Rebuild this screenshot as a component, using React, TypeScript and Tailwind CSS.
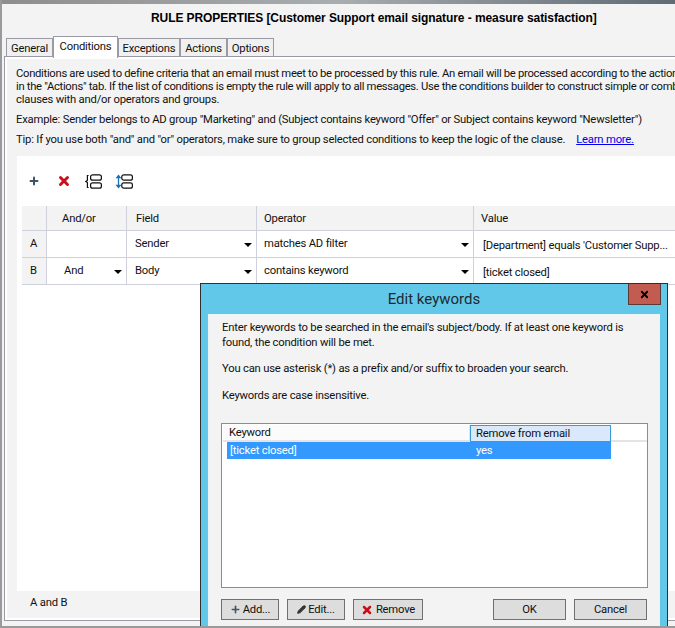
import { Plus, X, Pencil } from "lucide-react";

function GroupIcon() {
  return (
    <svg width="17" height="15" viewBox="0 0 17 15" fill="none" stroke="#111" strokeWidth="1.2">
      <path d="M3.6 1.5H2.4V6.4L0.8 7.5l1.6 1.1v4.9h1.2" />
      <rect x="5.6" y="0.8" width="10.8" height="5.4" rx="2" />
      <rect x="5.6" y="8.8" width="10.8" height="5.4" rx="2" />
    </svg>
  );
}

function MoveIcon() {
  return (
    <svg width="18" height="15" viewBox="0 0 18 15" fill="none">
      <path d="M3.5 3v9" stroke="#1673b8" strokeWidth="1.3" />
      <path d="M0.5 4.2L3.5 0.4l3 3.8zM0.5 10.8L3.5 14.6l3-3.8z" fill="#1673b8" />
      <rect x="6.8" y="0.8" width="10.6" height="5.4" rx="2" stroke="#111" strokeWidth="1.2" />
      <rect x="6.8" y="8.8" width="10.6" height="5.4" rx="2" stroke="#111" strokeWidth="1.2" />
    </svg>
  );
}

function Caret() {
  return <span className="absolute right-[4px] top-[12px] h-0 w-0 border-x-[4px] border-t-[4px] border-x-transparent border-t-black" />;
}

function Tab({ label, active, w }: { label: string; active?: boolean; w: string }) {
  if (active) {
    return (
      <div className={`${w} relative z-10 -mb-[2px] h-[22px] border border-b-0 border-[#9a9aa4] bg-white pt-[2px] text-center`}>
        {label}
      </div>
    );
  }
  return <div className={`${w} h-[18px] border border-b-0 border-[#9a9aa4] bg-[#f0f0f0] pt-[2px] text-center`}>{label}</div>;
}

function DialogButton({ children, className }: { children: React.ReactNode; className: string }) {
  return <div className={`flex h-[21px] items-center justify-center border border-[#707070] bg-[#dddddd] ${className}`}>{children}</div>;
}

export default function App() {
  return (
    <div className="relative h-[628px] w-[675px] overflow-hidden border-b-2 border-l-2 border-[#9a9a9a] bg-[#f3f3f3] font-['Roboto',sans-serif] text-[11.25px] leading-[16px] tracking-[-0.2px] text-[#111]">
      <div className="-ml-[2px] h-[4px] bg-gradient-to-r from-[#8d8d8d] via-[#a9adb0] to-[#5f6b75]" />
      <div className="pl-[149px] pt-[7px] font-['Liberation_Sans',sans-serif] text-[12px] font-bold leading-[15px] tracking-[-0.08px] text-black">
        RULE PROPERTIES [Customer Support email signature - measure satisfaction]
      </div>

      <div className="mt-[8px] flex h-[22px] items-end pl-[4px]">
        <Tab label="General" w="w-[47px]" />
        <Tab label="Conditions" active w="w-[65px]" />
        <Tab label="Exceptions" w="w-[62px]" />
        <Tab label="Actions" w="w-[47px]" />
        <Tab label="Options" w="w-[47px]" />
      </div>

      <div className="ml-[2px] h-[565px] w-[680px] border border-r-0 border-[#9a9aa4] bg-white p-[2px] pr-0">
        <div className="h-full bg-[#f3f3f3] pl-[10px]">
          <div className="-ml-[1px] whitespace-nowrap pt-[8px] leading-[13px]">
            <p className="tracking-[-0.3px]">Conditions are used to define criteria that an email must meet to be processed by this rule. An email will be processed according to the action</p>
            <p className="tracking-[-0.3px]">in the "Actions" tab. If the list of conditions is empty the rule will apply to all messages. Use the conditions builder to construct simple or combine</p>
            <p>clauses with and/or operators and groups.</p>
            <p className="pt-[7px]">Example: Sender belongs to AD group "Marketing" and (Subject contains keyword "Offer" or Subject contains keyword "Newsletter")</p>
            <p className="pt-[7px]">
              Tip: If you use both "and" and "or" operators, make sure to group selected conditions to keep the logic of the clause.
              <span className="ml-[11px] text-[#0000ee] underline">Learn more.</span>
            </p>
          </div>

          <div className="mt-[10px] h-[435px] bg-white pl-[5px]">
            <div className="flex h-[50px] items-center pl-[6px]">
              <Plus size={12} strokeWidth={4} className="text-[#3f5468]" />
              <X size={14} strokeWidth={5} className="ml-[17px] text-[#c8101a]" />
              <span className="ml-[14px] flex"><GroupIcon /></span>
              <span className="ml-[13px] flex"><MoveIcon /></span>
            </div>
            <div className="grid grid-cols-[25px_80px_130px_217px_240px] border-b border-[#cfd0de]">
              <div className="h-[25px] border-r border-b border-[#cfd0de] bg-[#f3f3f3]" />
              <div className="flex h-[25px] items-center border-r border-b border-[#cfd0de] bg-[#f3f3f3] pl-[15px] pt-[1px]">And/or</div>
              <div className="flex h-[25px] items-center border-r border-b border-[#cfd0de] bg-[#f3f3f3] pl-[9px] pt-[1px]">Field</div>
              <div className="flex h-[25px] items-center border-r border-b border-[#cfd0de] bg-[#f3f3f3] pl-[7px] pt-[1px]">Operator</div>
              <div className="flex h-[25px] items-center border-b border-[#cfd0de] bg-[#f3f3f3] pl-[7px] pt-[1px]">Value</div>

              <div className="flex h-[27px] items-center border-r border-b border-[#cfd0de] bg-[#f3f3f3] pl-[8px]">A</div>
              <div className="h-[27px] border-r border-b border-[#cfd0de]" />
              <div className="relative flex h-[27px] items-center border-r border-b border-[#cfd0de] pl-[8px]">Sender<Caret /></div>
              <div className="relative flex h-[27px] items-center border-r border-b border-[#cfd0de] pl-[7px]">matches AD filter<Caret /></div>
              <div className="flex h-[27px] items-center border-b border-[#cfd0de] pl-[9px] pt-[3px]">[Department] equals 'Customer Supp...</div>

              <div className="flex h-[26px] items-center border-r border-[#cfd0de] bg-[#f3f3f3] pl-[8px]">B</div>
              <div className="relative flex h-[26px] items-center border-r border-[#cfd0de] pl-[17px]">And<Caret /></div>
              <div className="relative flex h-[26px] items-center border-r border-[#cfd0de] pl-[8px]">Body<Caret /></div>
              <div className="relative flex h-[26px] items-center border-r border-[#cfd0de] pl-[7px]">contains keyword<Caret /></div>
              <div className="flex h-[26px] items-center pl-[9px] pt-[3px]">[ticket closed]</div>
            </div>
          </div>
          <div className="pl-[13px] pt-[4px]">A and B</div>
        </div>
      </div>

      {/* Edit keywords dialog */}
      <div className="absolute left-[198px] top-[283px] h-[360px] w-[468px] border border-[#2f2f2f] bg-[#62c8ea] px-[7px] pt-[30px]">
        <div className="absolute inset-x-0 top-[5px] text-center text-[15px] leading-[20px] tracking-normal text-[#1b2a30]">Edit keywords</div>
        <div className="absolute right-[6px] top-0 flex h-[21px] w-[33px] items-center justify-center border border-t-0 border-[#5a3a36] bg-[#c25c50]">
          <X size={11} strokeWidth={4} className="text-black" />
        </div>
        <div className="h-[330px] border border-[#e8f4f8] bg-[#f3f3f3] px-[13px] pt-[5px]">
          <div className="leading-[15px]">
            <p className="w-[410px]">Enter keywords to be searched in the email's subject/body. If at least one keyword is found, the condition will be met.</p>
            <p className="pt-[11px]">You can use asterisk (*) as a prefix and/or suffix to broaden your search.</p>
            <p className="pt-[12px]">Keywords are case insensitive.</p>
          </div>
          <div className="-ml-[1px] mt-[20px] h-[165px] w-[427px] border border-[#8d8d8d] bg-white pt-[1px] pl-[1px]">
            <div className="flex h-[17px] border-b-2 border-[#e4e4e4]">
              <div className="w-[247px] border-r border-[#e4e4e4] bg-[#fbfbfb] pl-[6px] leading-[15px]">Keyword</div>
              <div className="h-[17px] w-[141px] border border-[#3a9ad4] bg-[#d9e8fb] pl-[5px] leading-[15px]">Remove from email</div>
            </div>
            <div className="ml-[4px] flex h-[17px] w-[384px] items-center bg-[#3399ff] text-white">
              <span className="w-[249px] pl-[3px]">[ticket closed]</span>
              <span>yes</span>
            </div>
          </div>
          <div className="-ml-[1px] mt-[11px] flex w-[426px]">
            <DialogButton className="w-[58px] gap-[2px]"><Plus size={11} strokeWidth={3.5} className="text-[#3f5468]" />Add...</DialogButton>
            <DialogButton className="ml-[8px] w-[58px] gap-[2px]"><Pencil size={9} strokeWidth={3} fill="#333" className="text-[#333]" />Edit...</DialogButton>
            <DialogButton className="ml-[8px] w-[70px] gap-[3px]"><X size={12} strokeWidth={5} className="text-[#c8101a]" />Remove</DialogButton>
            <DialogButton className="ml-auto w-[73px] border-[#3478a8]">OK</DialogButton>
            <DialogButton className="ml-[8px] w-[73px]">Cancel</DialogButton>
          </div>
        </div>
      </div>
    </div>
  );
}
